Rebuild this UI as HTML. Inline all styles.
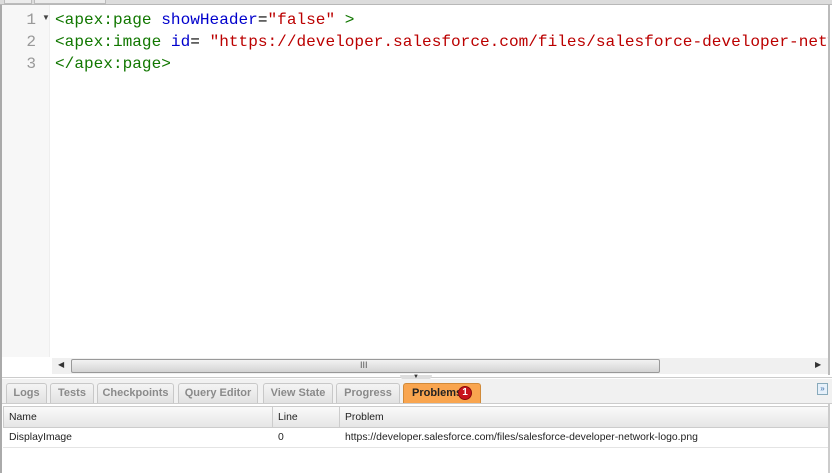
<!DOCTYPE html>
<html><head><style>
*{margin:0;padding:0;box-sizing:border-box}
body{width:832px;height:473px;overflow:hidden;background:#fff;position:relative;font-family:"Liberation Sans",Tahoma,sans-serif}
.abs{position:absolute}
.code{font-family:"Liberation Mono","Courier New",monospace;font-size:16.1px;line-height:22px;white-space:pre}
.tab{position:absolute;top:383px;height:20px;border:1px solid #c8c8c8;border-bottom:none;border-radius:3px 3px 0 0;background:linear-gradient(#f4f4f4,#e2e2e2);color:#8a8a8a;font-weight:bold;font-size:11px;text-align:center;line-height:19px}
.th{position:absolute;top:407px;height:21px;font-size:10.4px;line-height:21px;color:#222}
.td{position:absolute;top:428px;height:19px;font-size:10.4px;line-height:19px;color:#222}
</style></head><body>
<div class="abs" style="left:0;top:0;width:832px;height:5px;background:#dcdcdc;border-bottom:1px solid #b8b8b8"></div>
<div class="abs" style="left:4px;top:0;width:28px;height:4px;background:#ececec;border:1px solid #bbb;border-top:none"></div>
<div class="abs" style="left:34px;top:0;width:72px;height:4px;background:#ececec;border:1px solid #bbb;border-top:none"></div>
<div class="abs" style="left:0;top:5px;width:2px;height:468px;background:#aaa"></div>
<div class="abs" style="left:2px;top:5px;width:48px;height:352px;background:#f7f7f7;border-right:1px solid #eee"></div>
<div class="abs" style="left:828px;top:5px;width:2px;height:370px;background:#bbb"></div>
<div class="abs code" style="left:16px;top:9px;color:#999;width:20px;text-align:right">1
2
3</div>
<div class="abs" style="left:42px;top:13px;font-size:8px;color:#444">▼</div>
<div class="abs code" style="left:55px;top:9px;width:773px;overflow:hidden"><span style="color:#170">&lt;apex:page </span><span style="color:#00c">showHeader</span>=<span style="color:#b00">"false"</span><span style="color:#170"> &gt;</span>
<span style="color:#170">&lt;apex:image </span><span style="color:#00c">id</span>= <span style="color:#b00">"https://developer.salesforce.com/files/salesforce-developer-network-logo.png"</span>
<span style="color:#170">&lt;/apex:page&gt;</span></div>
<div class="abs" style="left:52px;top:358px;width:776px;height:16px;background:#f0f0f0"></div>
<div class="abs" style="left:58px;top:360px;font-size:8px;color:#333">◀</div>
<div class="abs" style="left:71px;top:359px;width:589px;height:14px;border:1px solid #999;border-radius:2px;background:linear-gradient(#f2f2f2,#d4d4d4)"></div>
<div class="abs" style="left:360px;top:360px;font-size:9px;color:#555">III</div>
<div class="abs" style="left:815px;top:360px;font-size:8px;color:#333">▶</div>
<div class="abs" style="left:2px;top:375px;width:830px;height:3px;background:#fff;border-bottom:1px solid #ccc"></div>
<div class="abs" style="left:400px;top:375px;width:32px;height:5px;background:#ddd;border-radius:0 0 6px 6px"></div>
<div class="abs" style="left:413px;top:374px;font-size:6px;color:#333">▼</div>
<div class="abs" style="left:2px;top:379px;width:830px;height:25px;background:#f1f1f1;border-bottom:1px solid #ccc"></div>
<div class="tab" style="left:6px;width:41px">Logs</div>
<div class="tab" style="left:50px;width:44px">Tests</div>
<div class="tab" style="left:97px;width:77px">Checkpoints</div>
<div class="tab" style="left:178px;width:80px">Query Editor</div>
<div class="tab" style="left:263px;width:70px">View State</div>
<div class="tab" style="left:336px;width:64px">Progress</div>
<div class="tab" style="left:403px;width:78px;background:#f9a54f;border-color:#d08a3a;color:#222;text-align:left;padding-left:8px">Problems</div>
<div class="abs" style="left:458px;top:386px;width:14px;height:14px;border-radius:50%;background:#c8141c;border:1px solid #8a0a0a;color:#fff;font-size:10px;font-weight:bold;text-align:center;line-height:12px">1</div>
<div class="abs" style="left:817px;top:383px;width:11px;height:12px;border:1px solid #8ab;background:#e6f0fa;color:#3a6ea8;font-size:8px;text-align:center;line-height:10px">»</div>
<div class="abs" style="left:3px;top:406px;width:826px;height:22px;border:1px solid #ccc;background:linear-gradient(#fafafa,#e6e6e6)"></div>
<div class="abs" style="left:272px;top:407px;width:1px;height:21px;background:#ccc"></div>
<div class="abs" style="left:339px;top:407px;width:1px;height:21px;background:#ccc"></div>
<div class="th" style="left:9px">Name</div>
<div class="th" style="left:278px">Line</div>
<div class="th" style="left:345px">Problem</div>
<div class="td" style="left:9px">DisplayImage</div>
<div class="td" style="left:278px">0</div>
<div class="td" style="left:345px">https://developer.salesforce.com/files/salesforce-developer-network-logo.png</div>
<div class="abs" style="left:3px;top:447px;width:826px;height:1px;background:#e4e4e4"></div>
<div class="abs" style="left:828px;top:404px;width:2px;height:69px;background:#ccc"></div>
</body></html>
